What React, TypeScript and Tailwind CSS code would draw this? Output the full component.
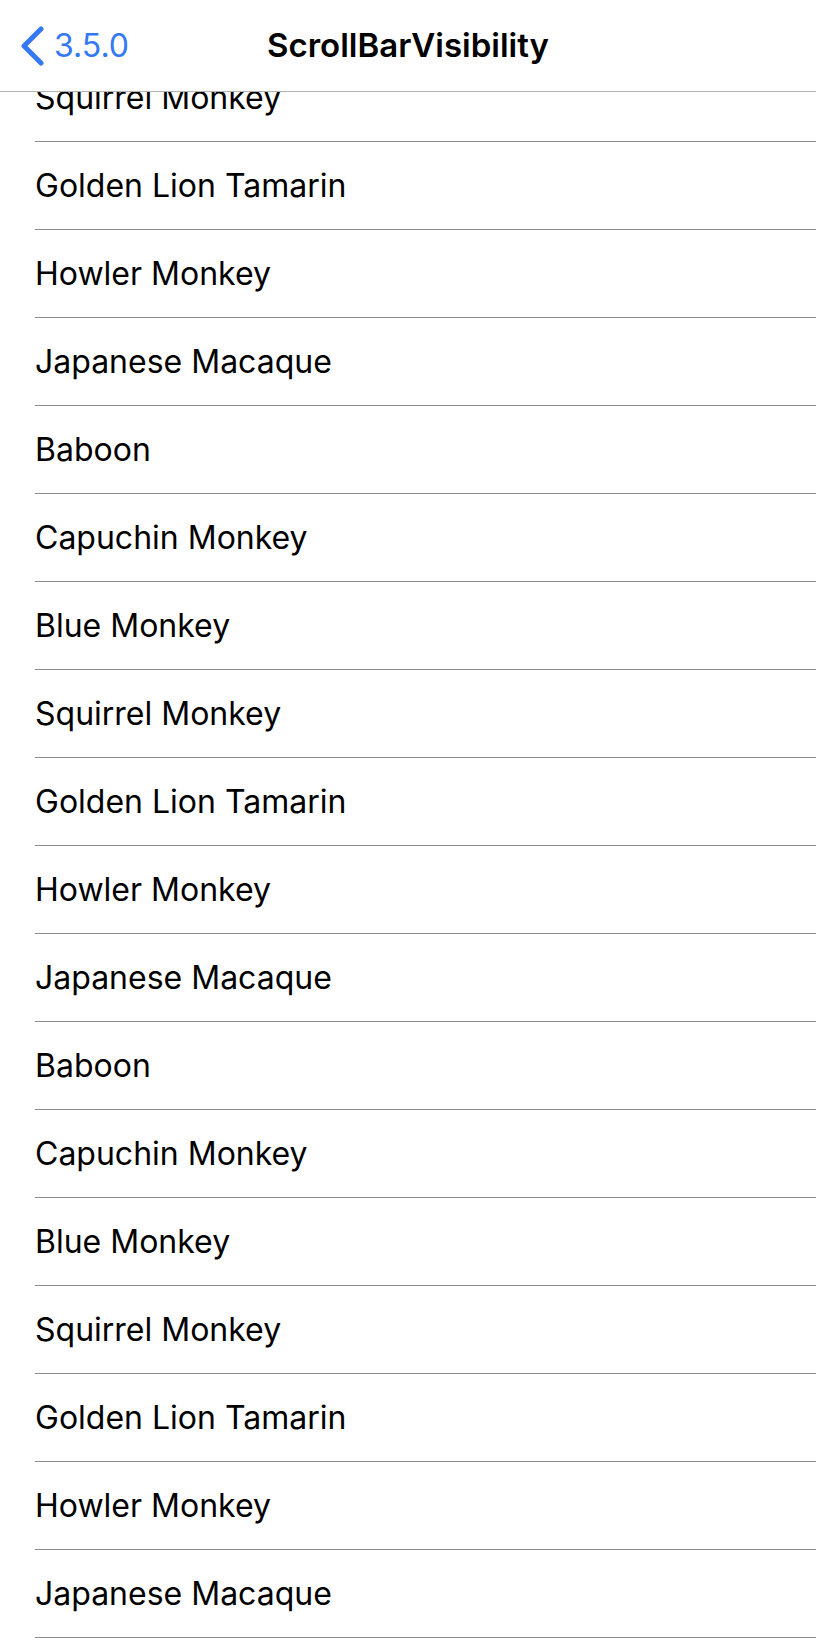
import React from 'react';

const monkeys = [
  'Squirrel Monkey',
  'Golden Lion Tamarin',
  'Howler Monkey',
  'Japanese Macaque',
  'Baboon',
  'Capuchin Monkey',
  'Blue Monkey',
];

// the list is scrolled a little, so the first row sits under the nav bar
const rows = Array.from({ length: 18 }, (_, i) => monkeys[i % monkeys.length]);

const NavBar: React.FC = () => {
  return (
    <header className="relative z-10 flex h-[92px] shrink-0 items-center border-b border-[#b4b4b4] bg-white">
      <button className="flex items-center gap-[9px] pl-[19px] text-[#3478f6]">
        <svg width="26" height="40" viewBox="0 0 26 40" fill="none">
          <path
            d="M22 3 L5 20 L22 37"
            stroke="currentColor"
            strokeWidth="5"
            strokeLinecap="round"
            strokeLinejoin="round"
          />
        </svg>
        <span className="text-[32px] leading-none">3.5.0</span>
      </button>
      <h1 className="absolute left-1/2 -translate-x-1/2 text-[33px] font-semibold leading-none text-black">
        ScrollBarVisibility
      </h1>
    </header>
  );
};

export default function App() {
  return (
    <div className="flex h-[1650px] w-[816px] flex-col overflow-hidden bg-white font-['Inter',sans-serif]">
      <NavBar />
      <div className="flex-1 overflow-hidden">
        <ul className="-mt-[38px]">
          {rows.map((name, i) => (
            <li key={i} className="ml-[35px] flex h-[88px] items-center border-b border-[#8c8c8c]">
              <span className="text-[32px] leading-none text-black">{name}</span>
            </li>
          ))}
        </ul>
      </div>
    </div>
  );
}
